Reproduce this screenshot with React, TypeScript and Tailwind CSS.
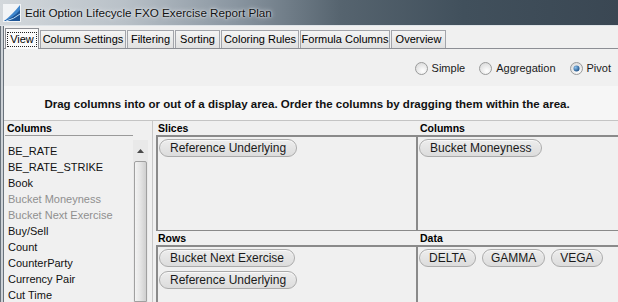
import React from "react";

const items: { label: string; muted?: boolean }[] = [
  { label: "BE_RATE" },
  { label: "BE_RATE_STRIKE" },
  { label: "Book" },
  { label: "Bucket Moneyness", muted: true },
  { label: "Bucket Next Exercise", muted: true },
  { label: "Buy/Sell" },
  { label: "Count" },
  { label: "CounterParty" },
  { label: "Currency Pair" },
  { label: "Cut Time" },
];

function Chip({ label, pad = "px-[10px]" }: { label: string; pad?: string }) {
  return (
    <div className={`h-[18px] shrink-0 rounded-full border border-[#ababab] bg-gradient-to-b from-[#ededed] to-[#dcdcdc] ${pad} text-[12px] leading-[16px] text-[#1a1a1a] shadow-[inset_0_1px_0_#f8f8f8]`}>
      {label}
    </div>
  );
}

function Radio({ label, checked }: { label: string; checked?: boolean }) {
  return (
    <div className="flex items-center gap-[4px]">
      <svg width="13" height="13" viewBox="0 0 13 13">
        <defs>
          <radialGradient id={`rg${label}`} cx="0.6" cy="0.7" r="0.7">
            <stop offset="0" stopColor="#ffffff" />
            <stop offset="1" stopColor="#dcdcdc" />
          </radialGradient>
          <radialGradient id={`dot${label}`} cx="0.35" cy="0.35" r="0.7">
            <stop offset="0" stopColor="#8fc3ee" />
            <stop offset="1" stopColor="#1b4f86" />
          </radialGradient>
        </defs>
        <circle cx="6.5" cy="6.5" r="6" fill={`url(#rg${label})`} stroke="#9a9b9b" strokeWidth="1" />
        {checked && <circle cx="6.5" cy="6.5" r="3" fill={`url(#dot${label})`} />}
      </svg>
      <span className="text-[11px] text-[#1a1a1a]">{label}</span>
    </div>
  );
}

const tabs = [
  { label: "View", w: "w-[34px]", sel: true },
  { label: "Column Settings", w: "w-[86px]" },
  { label: "Filtering", w: "w-[47px]" },
  { label: "Sorting", w: "w-[45px]" },
  { label: "Coloring Rules", w: "w-[78px]" },
  { label: "Formula Columns", w: "w-[90px]" },
  { label: "Overview", w: "w-[55px]" },
];

export default function App() {
  return (
    <div className="w-[618px] h-[302px] overflow-hidden bg-[#f0f0f0] flex flex-col font-['Liberation_Sans',Arial,sans-serif] text-black">
      {/* Title bar */}
      <div className="h-[26px] shrink-0 flex items-center bg-[linear-gradient(90deg,#d3d8dc_0%,#b9c1c8_20%,#8a96a1_38%,#56646f_55%,#41505c_75%,#3a4753_100%)] border-b border-[#dfe4e8]">
        <div className="ml-[3px] w-[18px] h-[18px] bg-[#f2f4f6]">
          <svg width="18" height="18" viewBox="0 0 18 18">
            <path d="M1 17 Q9 11 17 1 L17 17 Z" fill="#3f86cc" />
            <path d="M1 17 Q10 14 17 6 L17 17 Z" fill="#1d5597" />
            <path d="M3 17 Q11 15 17 10" stroke="#bcdcf6" strokeWidth="1" fill="none" />
          </svg>
        </div>
        <span className="ml-[4px] text-[11.7px] text-[#111] [text-shadow:0_0_5px_#e8ecf0,0_0_2px_#e8ecf0]">
          Edit Option Lifecycle FXO Exercise Report Plan
        </span>
      </div>

      {/* Body */}
      <div className="flex-1 flex min-h-0">
        <div className="w-[4px] shrink-0 border-l border-r border-[#6a737c] bg-[#cdd2d7]" />
        <div className="flex-1 flex flex-col min-w-0">
          {/* Tabs */}
          <div className="mt-[1px] h-[22px] shrink-0 flex items-end gap-px pl-[1px] border-b border-[#8c8e94]">
            {tabs.map((t) =>
              t.sel ? (
                <div
                  key={t.label}
                  className={`${t.w} h-[21px] -mb-px flex items-center justify-center border border-b-0 border-[#8c8e94] bg-[#fbfbfb] text-[11px]`}
                >
                  <span className="border border-dotted border-[#222] px-[2px] leading-[13px]">{t.label}</span>
                </div>
              ) : (
                <div
                  key={t.label}
                  className={`${t.w} h-[18px] flex items-center justify-center border border-b-0 border-[#a3a5ab] bg-gradient-to-b from-[#f4f4f4] to-[#e1e1e1] text-[11px]`}
                >
                  {t.label}
                </div>
              )
            )}
          </div>

          {/* Radio row */}
          <div className="h-[37px] shrink-0 flex items-center justify-end gap-[14px] pr-[7px] pt-[1px]">
            <Radio label="Simple" />
            <Radio label="Aggregation" />
            <Radio label="Pivot" checked />
          </div>

          {/* Instruction band */}
          <div className="h-[35px] shrink-0 flex items-center justify-center bg-[#f6f6f6] border-b border-[#c4c4c4] pt-[3px] pr-[8px] text-[11.5px] font-bold text-[#111]">
            Drag columns into or out of a display area. Order the columns by dragging them within the area.
          </div>

          {/* Main */}
          <div className="flex-1 flex min-h-0">
            {/* Left list */}
            <div className="w-[149px] shrink-0 flex flex-col border-r border-[#c8c8c8]">
              <div className="ml-[1px] w-[128px] h-[15px] shrink-0 border-b border-[#9a9a9a] pl-[2px] text-[10.5px] font-bold leading-[14px]">
                Columns
              </div>
              <div className="flex-1 flex min-h-0">
                <div className="w-[129px] pt-[7px] pl-[4px]">
                  {items.map((it) => (
                    <div
                      key={it.label}
                      className={`h-[16px] leading-[16px] text-[11px] ${it.muted ? "text-[#8f8f8f]" : "text-[#111]"}`}
                    >
                      {it.label}
                    </div>
                  ))}
                </div>
                <div className="w-[15px] shrink-0 mt-[4px] flex flex-col bg-[#e9e9e9]">
                  <div className="h-[21px] flex items-center justify-center">
                    <svg width="7" height="4" viewBox="0 0 7 4">
                      <path d="M0 4 L3.5 0 L7 4 Z" fill="#4a4a4a" />
                    </svg>
                  </div>
                  <div className="flex-1 mx-[1px] rounded-t-[2px] border border-[#a0a0a0] bg-gradient-to-r from-[#f3f3f3] via-[#e4e4e4] to-[#cfcfcf]" />
                </div>
              </div>
            </div>

            {/* Pivot areas */}
            <div className="flex-1 pl-[3px] grid grid-cols-[260px_1fr] grid-rows-[14px_96px_14px_96px]">
              <div className="pl-[2px] text-[10.5px] font-bold leading-[14px]">Slices</div>
              <div className="pl-[4px] text-[10.5px] font-bold leading-[14px]">Columns</div>
              <div className="border-t-2 border-l-2 border-b border-[#8a8a8a] pt-[2px] pl-[1px] flex flex-col items-start gap-[4px]">
                <Chip label="Reference Underlying" />
              </div>
              <div className="border-t-2 border-l-2 border-b border-[#8a8a8a] pt-[2px] pl-[1px] flex flex-col items-start gap-[4px]">
                <Chip label="Bucket Moneyness" />
              </div>
              <div className="pl-[2px] text-[10.5px] font-bold leading-[14px]">Rows</div>
              <div className="pl-[4px] text-[10.5px] font-bold leading-[14px]">Data</div>
              <div className="border-t-2 border-l-2 border-b border-[#8a8a8a] pt-[2px] pl-[1px] flex flex-col items-start gap-[4px]">
                <Chip label="Bucket Next Exercise" />
                <Chip label="Reference Underlying" />
              </div>
              <div className="border-t-2 border-l-2 border-b border-[#8a8a8a] pt-[2px] pl-[1px] flex items-start gap-[6px]">
                <Chip label="DELTA" pad="px-[9px]" />
                <Chip label="GAMMA" pad="px-[8px]" />
                <Chip label="VEGA" pad="px-[8px]" />
              </div>
            </div>
          </div>
        </div>
      </div>
    </div>
  );
}
